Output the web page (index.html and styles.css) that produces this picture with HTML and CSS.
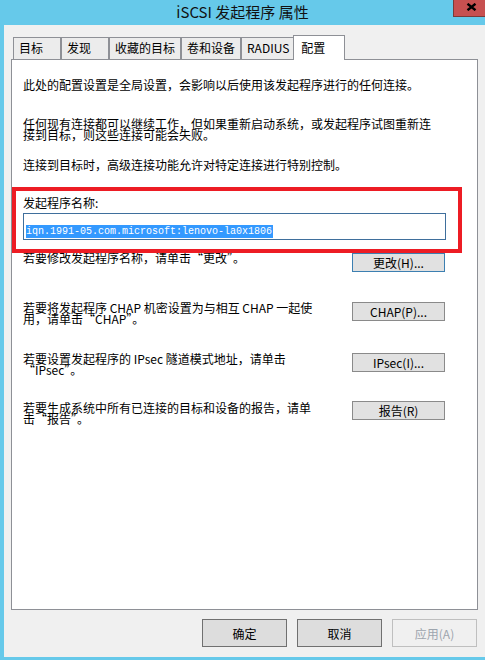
FILE: index.html
```html
<!DOCTYPE html>
<html lang="zh-CN">
<head>
<meta charset="utf-8">
<title>iSCSI 发起程序 属性</title>
<link rel="stylesheet" href="styles.css">
</head>
<body>
<div class="window">
  <header class="titlebar">
    <span class="spacer"></span>
    <h1 class="title">iSCSI 发起程序 属性</h1>
    <div class="controls">
      <button class="close" aria-label="关闭">
        <svg width="11" height="8" viewBox="0 0 11 8"><path d="M1.5 0.8 L9.5 7.2 M9.5 0.8 L1.5 7.2" stroke="#000" stroke-width="2.4" fill="none"/></svg>
      </button>
    </div>
  </header>
  <main class="client">
    <nav class="tabs">
      <div class="tab">目标</div>
      <div class="tab">发现</div>
      <div class="tab">收藏的目标</div>
      <div class="tab">卷和设备</div>
      <div class="tab">RADIUS</div>
      <div class="tab tab-active">配置</div>
    </nav>
    <section class="panel">
      <p class="txt p1">此处的配置设置是全局设置，会影响以后使用该发起程序进行的任何连接。</p>
      <p class="txt p2">任何现有连接都可以继续工作，但如果重新启动系统，或发起程序试图重新连<br>接到目标，则这些连接可能会失败。</p>
      <p class="txt p3">连接到目标时，高级连接功能允许对特定连接进行特别控制。</p>
      <label class="txt name-label">发起程序名称:</label>
      <div class="edit"><span class="sel">iqn.1991-05.com.microsoft:lenovo-la0x1806</span></div>
      <div class="row row1">
        <p class="txt">若要修改发起程序名称，请单击“更改”。</p>
        <button class="btn btn-default">更改(H)...</button>
      </div>
      <div class="row row2">
        <p class="txt">若要将发起程序 CHAP 机密设置为与相互 CHAP 一起使<br>用，请单击“CHAP”。</p>
        <button class="btn">CHAP(P)...</button>
      </div>
      <div class="row row3">
        <p class="txt">若要设置发起程序的 IPsec 隧道模式地址，请单击<br>“IPsec”。</p>
        <button class="btn">IPsec(I)...</button>
      </div>
      <div class="row row4">
        <p class="txt">若要生成系统中所有已连接的目标和设备的报告，请单<br>击“报告”。</p>
        <button class="btn">报告(R)</button>
      </div>
      <div class="highlight-box"></div>
    </section>
    <footer class="actions">
      <button class="dlg-btn ok">确定</button>
      <button class="dlg-btn">取消</button>
      <button class="dlg-btn disabled" disabled>应用(A)</button>
    </footer>
  </main>
</div>
</body>
</html>
```
FILE: styles.css
```css
* { box-sizing: border-box; }
html, body { margin: 0; padding: 0; }
body {
  font-family: "Noto Sans CJK SC", "Noto Sans", sans-serif;
  background: #66c9ea;
}
.window {
  width: 485px;
  height: 660px;
  background: #66c9ea;
  display: flex;
  flex-direction: column;
  overflow: hidden;
}
.titlebar {
  height: 25px;
  flex: none;
  display: grid;
  grid-template-columns: 1fr auto 1fr;
}
.title {
  margin: 0;
  font-size: 15px;
  font-weight: normal;
  line-height: 24px;
  color: #111;
  white-space: nowrap;
}
.controls {
  display: flex;
  justify-content: flex-end;
  align-items: flex-start;
}
.close {
  width: 32px;
  height: 17px;
  padding: 0 0 0 3px;
  margin: 0;
  border: 0;
  border-left: 1px solid #7a3a38;
  border-bottom: 1px solid #7a3a38;
  background: #c75050;
  display: flex;
  align-items: center;
  justify-content: center;
}
.close svg { display: block; margin-top: -2px; }
.client {
  flex: 1;
  margin: 0 0 3px 4px;
  background: #f0f0f0;
  padding-top: 10px;
  display: flex;
  flex-direction: column;
}
.tabs {
  display: flex;
  align-items: flex-end;
  height: 24px;
  margin-left: 9px;
}
.tab {
  height: 22px;
  min-width: 48px;
  padding: 0 5px;
  border: 1px solid #8e9096;
  border-bottom: 0;
  background: #ececec;
  font-size: 12px;
  line-height: 20px;
  color: #000;
  white-space: nowrap;
}
.tab-active {
  position: relative;
  z-index: 2;
  height: 25px;
  min-width: 52px;
  margin-left: -2px;
  margin-bottom: -1px;
  padding: 2px 7px 0 7px;
  background: #fff;
}
.panel {
  position: relative;
  margin: 0 7px;
  height: 551px;
  flex: none;
  border: 1px solid #8e9096;
  background: #fff;
  padding: 19px 31px 0 11px;
}
.txt {
  margin: 0;
  font-size: 12px;
  line-height: 11px;
  color: #000;
  white-space: nowrap;
  display: block;
}
.p2 { margin-top: 28px; }
.p3 { margin-top: 19px; }
.name-label { margin-top: 27px; }
.edit {
  margin-top: 5px;
  height: 27px;
  border: 1px solid #3f6f9c;
  padding: 1px 0 0 2px;
}
.sel {
  display: inline-block;
  background: #3399ff;
  color: #fff;
  font-family: "Liberation Mono", "DejaVu Sans Mono", monospace;
  font-size: 10px;
  line-height: 13px;
  height: 13px;
  padding-right: 1px;
}
.row {
  display: flex;
  justify-content: space-between;
  align-items: flex-start;
}
.row1 { margin-top: 12px; }
.row1 .btn { margin-top: 1px; }
.row2 { margin-top: 30px; }
.row3 { margin-top: 29px; }
.row4 { margin-top: 26px; }
.row4 .txt { margin-top: 1px; }
.btn {
  width: 93px;
  height: 19px;
  margin: 0 1px 0 0;
  padding: 0;
  border: 1px solid #8a8a8a;
  background: #e1e1e1;
  font-family: "Noto Sans CJK SC", sans-serif;
  font-size: 12px;
  line-height: 16px;
  color: #000;
}
.btn-default { border-color: #3c7fb1; }
.highlight-box {
  position: absolute;
  left: 0;
  top: 127px;
  width: 450px;
  height: 66px;
  border: 4px solid #ed1c24;
}
.actions {
  display: flex;
  justify-content: flex-end;
  gap: 10px;
  margin-top: 9px;
  padding-right: 8px;
}
.dlg-btn {
  width: 85px;
  height: 28px;
  margin: 0;
  padding: 0;
  border: 1px solid #707070;
  background: #dddddd;
  font-family: "Noto Sans CJK SC", sans-serif;
  font-size: 12px;
  color: #000;
}
.dlg-btn.ok { margin-right: 0; }
.dlg-btn.disabled {
  border-color: #bfbfbf;
  background: #f0f0f0;
  color: #9da5ae;
}
```
